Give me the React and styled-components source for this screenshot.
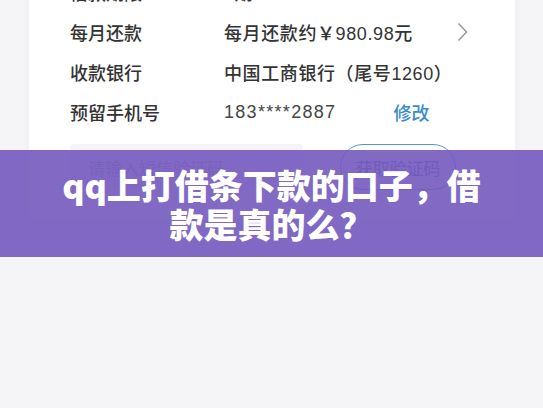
import React from "react";
import styled, { createGlobalStyle } from "styled-components";

const GlobalStyle = createGlobalStyle`
    body {
        margin: 0;
        background: #f5f5f7;
        font-family: "Noto Sans CJK SC", "Noto Sans", sans-serif;
    }
`;

const Page = styled.div`
    position: relative;
    width: 543px;
    height: 408px;
    overflow: hidden;
    background: #f5f5f7;
`;

const Card = styled.div`
    margin: -28px 28px 0 29px;
    padding: 0 47px 28px 41px;
    background: #ffffff;
    border-radius: 0 0 8px 8px;
    box-shadow: 0 2px 10px rgba(0, 0, 0, 0.04);
`;

const Row = styled.div`
    display: flex;
    align-items: center;
    height: 40px;
    font-size: 18px;
    font-weight: 500;
    color: #333333;
`;

const Label = styled.div`
    width: 154px;
    flex-shrink: 0;
`;

const Value = styled.div`
    font-family: "Liberation Sans", "Noto Sans CJK SC", sans-serif;
    font-weight: ${(p) => (p.light ? 400 : 500)};
    color: ${(p) => (p.light ? "#454545" : "#333333")};
    letter-spacing: ${(p) => (p.light ? "1.3px" : "0.6px")};
`;

const Chevron = styled.svg`
    margin-left: auto;
    width: 11px;
    height: 20px;
`;

const EditLink = styled.a`
    margin-left: 57px;
    color: #3a8bcb;
    text-decoration: none;
`;

const CodeRow = styled.div`
    display: flex;
    align-items: center;
    margin-top: 12px;
    height: 46px;
`;

const CodeInput = styled.div`
    width: 215px;
    height: 46px;
    padding-left: 18px;
    border-radius: 4px;
    background: #f4f4f6;
    display: flex;
    align-items: center;
    font-size: 17px;
    color: #a3a3a8;
`;

const CodeButton = styled.button`
    margin-left: 37px;
    width: 116px;
    height: 46px;
    border-radius: 23px;
    border: 1.5px solid #4f96d6;
    background: #ffffff;
    font-family: inherit;
    font-size: 17px;
    color: #3d67b8;
`;

const Banner = styled.div`
    position: absolute;
    left: 0;
    right: 0;
    top: 150px;
    height: 107px;
    background: rgba(117, 90, 190, 0.91);
    display: flex;
    align-items: center;
    justify-content: center;
`;

const Title = styled.h1`
    margin: 0;
    width: 430px;
    text-align: center;
    font-size: 34px;
    line-height: 39px;
    font-weight: 900;
    color: #ffffff;
`;

const App = () => {
    return (
        <Page>
            <GlobalStyle />
            <Card>
                <Row>
                    <Label>借款期限</Label>
                    <Value>3期</Value>
                </Row>
                <Row>
                    <Label>每月还款</Label>
                    <Value>每月还款约￥980.98元</Value>
                    <Chevron viewBox="0 0 11 20">
                        <path d="M1.5 1.5 L9.5 10 L1.5 18.5" fill="none" stroke="#9c9c9c" strokeWidth="1.6" />
                    </Chevron>
                </Row>
                <Row>
                    <Label>收款银行</Label>
                    <Value>中国工商银行（尾号1260）</Value>
                </Row>
                <Row>
                    <Label>预留手机号</Label>
                    <Value light>183****2887</Value>
                    <EditLink href="#">修改</EditLink>
                </Row>
                <CodeRow>
                    <CodeInput>请输入短信验证码</CodeInput>
                    <CodeButton>获取验证码</CodeButton>
                </CodeRow>
            </Card>
            <Banner>
                <Title>qq上打借条下款的口子，借款是真的么？</Title>
            </Banner>
        </Page>
    );
};

export default App;
